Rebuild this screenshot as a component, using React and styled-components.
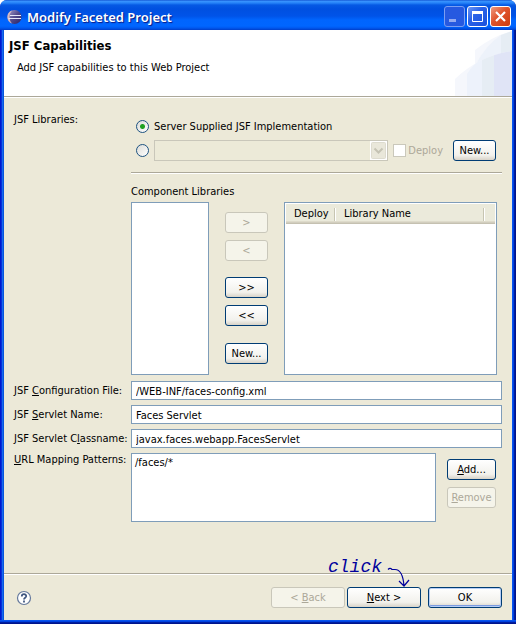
import React from "react";
import styled, { createGlobalStyle, css } from "styled-components";

const GlobalStyle = createGlobalStyle`
  *, *::before, *::after { box-sizing: border-box; }
  body { margin: 0; background: #fff; }
  body, button, input, select, textarea {
    font-family: "DejaVu Sans Condensed", "Noto Sans", sans-serif;
    font-size: 11px;
    line-height: 14px;
    color: #000;
  }
`;

const Dialog = styled.main`
  display: flex;
  flex-direction: column;
  min-height: 100vh;
  padding: 0 4px 4px;
  border-radius: 7px 7px 0 0;
  overflow: hidden;
  background:
    linear-gradient(#0855ee 0 1px, #0041e0 1px 2px, #001ea0 2px 3px, #00138c 3px) bottom / 100% 4px no-repeat,
    linear-gradient(90deg, #0019cf 0 1px, #0831d9 1px 2px, #166aee 2px 3px, #0855dd 3px) left / 4px 100% no-repeat,
    linear-gradient(90deg, #0855ee 0 1px, #0041e0 1px 2px, #001ea0 2px 3px, #00138c 3px) right / 4px 100% no-repeat,
    #0054e3;
`;

const TitleBar = styled.header`
  display: flex;
  align-items: center;
  height: 30px;
  margin: 0 -4px;
  padding: 3px 5px 0 7px;
  background: linear-gradient(#0845c8 0, #3c96ff 1px, #2582f8 3px, #0659e4 5px, #0050e0 9px, #0053e8 16px, #0065fe 20px, #0066ff 26px, #0058ef 28px, #003dc8 30px);
`;

const Title = styled.h1`
  flex: 1;
  margin: 0 0 0 5px;
  font-family: "Noto Sans", sans-serif;
  font-size: 13px;
  line-height: 18px;
  font-weight: 600;
  color: #fff;
  text-shadow: 1px 1px 1px #0a1883;
`;

const CaptionButtons = styled.div`
  display: flex;
  gap: 2px;
`;

const captionTones = {
  dim: css`border-color: #7b9ef2; background: #2659e0;`,
  normal: css`border-color: #fff; background: linear-gradient(135deg, #6d96f4, #2a62e8 40%, #1b50dc);`,
  close: css`border-color: #fff; background: linear-gradient(135deg, #ee9a80, #e0532b 45%, #cc3c10);`,
};

const CaptionButton = styled.button`
  width: 21px;
  height: 21px;
  padding: 0;
  border: 1px solid;
  border-radius: 3px;
  ${({ $tone }) => captionTones[$tone]}
  svg { display: block; }
`;

const Banner = styled.section`
  display: flex;
  justify-content: space-between;
  height: 68px;
  background: #fff;
  border-bottom: 1px solid #fff;
  box-shadow: inset 0 -1px #aca899;
  padding-bottom: 1px;
`;

const BannerText = styled.div`
  padding: 8px 5px;
`;

const BannerTitle = styled.h2`
  margin: 0;
  font-size: 13px;
  line-height: 16px;
`;

const BannerNote = styled.p`
  margin: 7px 0 0 8px;
`;

const Body = styled.form`
  display: flex;
  flex-direction: column;
  flex: 1;
  background: #ece9d8;
`;

const Fields = styled.div`
  display: grid;
  grid-template-columns: 117px minmax(0, 1fr);
  row-gap: 5px;
  flex: 1;
  align-content: start;
  padding: 15px 10px;
`;

const Caption = styled.label`
  align-self: ${({ $top }) => ($top ? "start" : "center")};
  white-space: nowrap;
`;

const Libraries = styled.div`
  display: flex;
  flex-direction: column;
  margin-bottom: 1px;
`;

const ChoiceRow = styled.div`
  display: flex;
  align-items: center;
  gap: 5px;
  height: ${({ $tall }) => ($tall ? 21 : 27)}px;
  padding: 0 6px 0 5px;
`;

const Radio = styled.input`
  appearance: none;
  flex: none;
  width: 13px;
  height: 13px;
  margin: 0;
  border: 1px solid #1d5281;
  border-radius: 50%;
  background: linear-gradient(135deg, #dcdcd7, #fff);
  &:checked {
    background: radial-gradient(circle, #21a121 0 2px, transparent 3px), linear-gradient(135deg, #dcdcd7, #fff);
  }
`;

const Combo = styled.div`
  display: flex;
  align-items: stretch;
  flex: 1;
  height: 21px;
  border: 1px solid #c9c7ba;
  select {
    appearance: none;
    flex: 1;
    min-width: 0;
    border: 0;
    background: #ece9d8;
  }
  svg { flex: none; background: #fff; }
`;

const DeployChoice = styled.label`
  display: flex;
  align-items: center;
  gap: 2px;
  margin-right: 5px;
  color: #aca899;
`;

const CheckBox = styled.input`
  appearance: none;
  width: 13px;
  height: 13px;
  margin: 0;
  border: 1px solid #cac8bb;
  background: #fff;
`;

const Rule = styled.hr`
  width: 100%;
  height: 2px;
  margin: ${({ $gap }) => $gap || 0}px 0;
  border: 0;
  border-top: 1px solid #aca899;
  border-bottom: 1px solid #fff;
`;

const ListCaption = styled.label`
  margin-bottom: 3px;
`;

const Transfer = styled.div`
  display: flex;
  gap: 16px;
  height: 173px;
  padding-right: 5px;
`;

const ListBox = styled.select`
  width: 78px;
  height: 100%;
  border: 1px solid #7f9db9;
  border-radius: 0;
  background: #fff;
`;

const Mover = styled.div`
  display: flex;
  flex-direction: column;
  width: 43px;
  padding-top: 10px;
`;

const Button = styled.button`
  width: ${({ $width }) => $width}px;
  height: 21px;
  padding: 0;
  margin-bottom: ${({ $after }) => $after || 0}px;
  flex: none;
  border: 1px solid #003c74;
  border-radius: 3px;
  background: linear-gradient(#fff, #f2f1ec 75%, #d8d3c8);
  white-space: nowrap;
  ${({ $primary }) => $primary && css`box-shadow: inset 0 0 0 1px #b6cdf5, inset 0 -2px #7b9be0;`}
  &:disabled {
    border-color: #c9c7ba;
    background: #f5f4ea;
    color: #aca899;
  }
`;

const TableFrame = styled.div`
  flex: 1;
  padding: 1px;
  border: 1px solid #7f9db9;
  background: #fff;
`;

const LibraryTable = styled.table`
  width: 100%;
  border-collapse: collapse;
  table-layout: fixed;
  th {
    height: 20px;
    padding: 0 0 0 8px;
    font-weight: 400;
    text-align: left;
    background:
      linear-gradient(#c7c5b2, #c7c5b2) right 1px center / 1px 13px no-repeat,
      linear-gradient(#fff, #fff) right center / 1px 13px no-repeat,
      linear-gradient(#ebeadb 0 17px, #dedbcb 17px 18px, #d2cebf 18px 19px, #c5c1b1 19px);
  }
  th:last-child { width: 10px; padding: 0; background: linear-gradient(#ebeadb 0 17px, #dedbcb 17px 18px, #d2cebf 18px 19px, #c5c1b1 19px); }
  th:first-child { width: 50px; }
`;

const field = css`
  width: 100%;
  border: 1px solid #7f9db9;
  border-radius: 0;
  background: #fff;
  outline: 0;
`;

const TextField = styled.input`
  ${field}
  height: 19px;
  padding: 1px 4px 0;
`;

const PatternArea = styled.textarea`
  ${field}
  display: block;
  flex: 1;
  min-width: 0;
  height: 69px;
  padding: 2px 3px;
  resize: none;
`;

const PatternRow = styled.div`
  display: flex;
  gap: 11px;
  padding-right: 6px;
`;

const SideButtons = styled.div`
  padding-top: 6px;
  button { display: block; }
`;

const Footer = styled.footer`
  display: flex;
  align-items: center;
  height: 45px;
  padding: 0 10px 0 12px;
`;

const HelpButton = styled.button`
  width: 16px;
  height: 16px;
  padding: 0;
  margin-right: auto;
  border: 0;
  background: none;
  svg { display: block; }
`;

const NextWrap = styled.div`
  position: relative;
  margin: 0 7px 0 2px;
`;

const Note = styled.div`
  position: absolute;
  left: -19px;
  bottom: 20px;
  display: flex;
  align-items: flex-end;
  gap: 5px;
  pointer-events: none;
  color: #00009c;
  span {
    margin-bottom: 11px;
    font-family: "Liberation Mono", monospace;
    font-size: 18px;
    font-style: italic;
    line-height: 20px;
  }
`;

const EclipseIcon = () => (
  <svg width="15" height="16" viewBox="0 0 15 16" aria-hidden="true">
    <defs>
      <linearGradient id="orb" x1="0" y1="0" x2="1" y2="1">
        <stop offset="0" stopColor="#a8a0cc" />
        <stop offset="0.5" stopColor="#514a8c" />
        <stop offset="1" stopColor="#2a2264" />
      </linearGradient>
    </defs>
    <circle cx="7.5" cy="8" r="7" fill="url(#orb)" />
    <path d="M5 1.4A7 7 0 0 0 5 14.6A10 10 0 0 1 5 1.4Z" fill="#d8b9bf" />
    <path d="M3 6.5H14M1.5 9.5H14" stroke="#e6e8f8" strokeWidth="1" />
  </svg>
);

const BannerArt = () => (
  <svg width="57" height="66" viewBox="0 0 57 66" aria-hidden="true">
    <defs>
      <clipPath id="lower"><path d="M0 49Q24 26 57 21V66H0Z" /></clipPath>
    </defs>
    <path d="M20 20Q38 6 57 1V66H20Z" fill="#f5f7fc" />
    <path d="M20 36Q30 16 46 5V66H20Z" fill="#edf2fa" />
    <path d="M46 5L57 1V66H46Z" fill="#e6edf4" />
    <g clipPath="url(#lower)">
      <path d="M0 0H57V66H0Z" fill="#f5f7fc" />
      <path d="M12 66V44Q18 34 27 29V66Z" fill="#edf2fb" />
      <path d="M27 0H39V66H27Z" fill="#e6edf4" />
      <path d="M39 0H57V66H39Z" fill="#e0e4f6" />
    </g>
  </svg>
);

const textRows = [
  { id: "config", label: <>JSF <u>C</u>onfiguration File:</>, value: "/WEB-INF/faces-config.xml" },
  { id: "name", label: <>JSF <u>S</u>ervlet Name:</>, value: "Faces Servlet" },
  { id: "class", label: <>JSF Servlet C<u>l</u>assname:</>, value: "javax.faces.webapp.FacesServlet" },
];

export default function App() {
  return (
    <>
      <GlobalStyle />
      <Dialog>
        <TitleBar>
          <EclipseIcon />
          <Title>Modify Faceted Project</Title>
          <CaptionButtons>
            <CaptionButton $tone="dim" aria-label="Minimize">
              <svg width="19" height="19"><path d="M4 12H11V15H4Z" fill="#93aaf0" /></svg>
            </CaptionButton>
            <CaptionButton $tone="normal" aria-label="Maximize">
              <svg width="19" height="19"><path d="M4.5 5V14.5H14.5V5M4 5.5H15" fill="none" stroke="#fff" /><path d="M4 4H15V7H4Z" fill="#fff" /></svg>
            </CaptionButton>
            <CaptionButton $tone="close" aria-label="Close">
              <svg width="19" height="19"><path d="M5 5L14 14M14 5L5 14" stroke="#fff" strokeWidth="2.2" /></svg>
            </CaptionButton>
          </CaptionButtons>
        </TitleBar>
        <Banner>
          <BannerText>
            <BannerTitle>JSF Capabilities</BannerTitle>
            <BannerNote>Add JSF capabilities to this Web Project</BannerNote>
          </BannerText>
          <BannerArt />
        </Banner>
        <Body onSubmit={(e) => e.preventDefault()}>
          <Fields>
            <Caption as="span" $top>JSF Libraries:</Caption>
            <Libraries>
              <ChoiceRow>
                <Radio type="radio" name="source" id="server" defaultChecked />
                <label htmlFor="server">Server Supplied JSF Implementation</label>
              </ChoiceRow>
              <ChoiceRow $tall>
                <Radio type="radio" name="source" aria-label="Library" />
                <Combo>
                  <select disabled aria-label="Library" />
                  <svg width="17" height="19" aria-hidden="true">
                    <rect x="1.5" y="1.5" width="14" height="16" rx="1" fill="#e9e7da" stroke="#dddbcf" />
                    <path d="M4.5 7.5L8.5 11.5L12.5 7.5" fill="none" stroke="#c5c3b4" strokeWidth="2" />
                  </svg>
                </Combo>
                <DeployChoice><CheckBox type="checkbox" disabled />Deploy</DeployChoice>
                <Button type="button" $width={43}>New...</Button>
              </ChoiceRow>
              <Rule $gap={11} />
              <ListCaption htmlFor="components">Component Libraries</ListCaption>
              <Transfer>
                <ListBox id="components" multiple />
                <Mover>
                  <Button type="button" $width={43} $after={7} disabled>&gt;</Button>
                  <Button type="button" $width={43} $after={16} disabled>&lt;</Button>
                  <Button type="button" $width={43} $after={7}>&gt;&gt;</Button>
                  <Button type="button" $width={43} $after={17}>&lt;&lt;</Button>
                  <Button type="button" $width={43}>New...</Button>
                </Mover>
                <TableFrame>
                  <LibraryTable>
                    <thead><tr><th>Deploy</th><th>Library Name</th><th aria-hidden="true" /></tr></thead>
                  </LibraryTable>
                </TableFrame>
              </Transfer>
            </Libraries>
            {textRows.map((row) => (
              <React.Fragment key={row.id}>
                <Caption htmlFor={row.id}>{row.label}</Caption>
                <TextField id={row.id} defaultValue={row.value} spellCheck={false} />
              </React.Fragment>
            ))}
            <Caption htmlFor="patterns" $top><u>U</u>RL Mapping Patterns:</Caption>
            <PatternRow>
              <PatternArea id="patterns" defaultValue="/faces/*" spellCheck={false} />
              <SideButtons>
                <Button type="button" $width={49} $after={7}><u>A</u>dd...</Button>
                <Button type="button" $width={49} disabled><u>R</u>emove</Button>
              </SideButtons>
            </PatternRow>
          </Fields>
          <Rule />
          <Footer>
            <HelpButton type="button" aria-label="Help">
              <svg width="16" height="16" viewBox="0 0 16 16">
                <circle cx="8" cy="8" r="6.5" fill="#fff" stroke="#65799c" strokeWidth="1.2" />
                <path d="M5.8 6.4C5.8 3.4 10.3 3.6 10.2 6.2C10.1 7.7 8 7.8 8 9.4M8 10.6V12.4" fill="none" stroke="#405780" strokeWidth="1.8" />
              </svg>
            </HelpButton>
            <Button type="button" $width={74} disabled>&lt; <u>B</u>ack</Button>
            <NextWrap>
              <Button type="button" $width={74}><u>N</u>ext &gt;</Button>
              <Note>
                <span>click</span>
                <svg width="24" height="22" viewBox="0 0 24 22" aria-hidden="true">
                  <path d="M1 3.5C3 1.5 4 2.5 5 3.5H8C12 3.5 16 7 17 20M12 15L17 20L22 14" fill="none" stroke="currentColor" strokeWidth="1.2" />
                </svg>
              </Note>
            </NextWrap>
            <Button type="submit" $width={74} $primary>OK</Button>
          </Footer>
        </Body>
      </Dialog>
    </>
  );
}
